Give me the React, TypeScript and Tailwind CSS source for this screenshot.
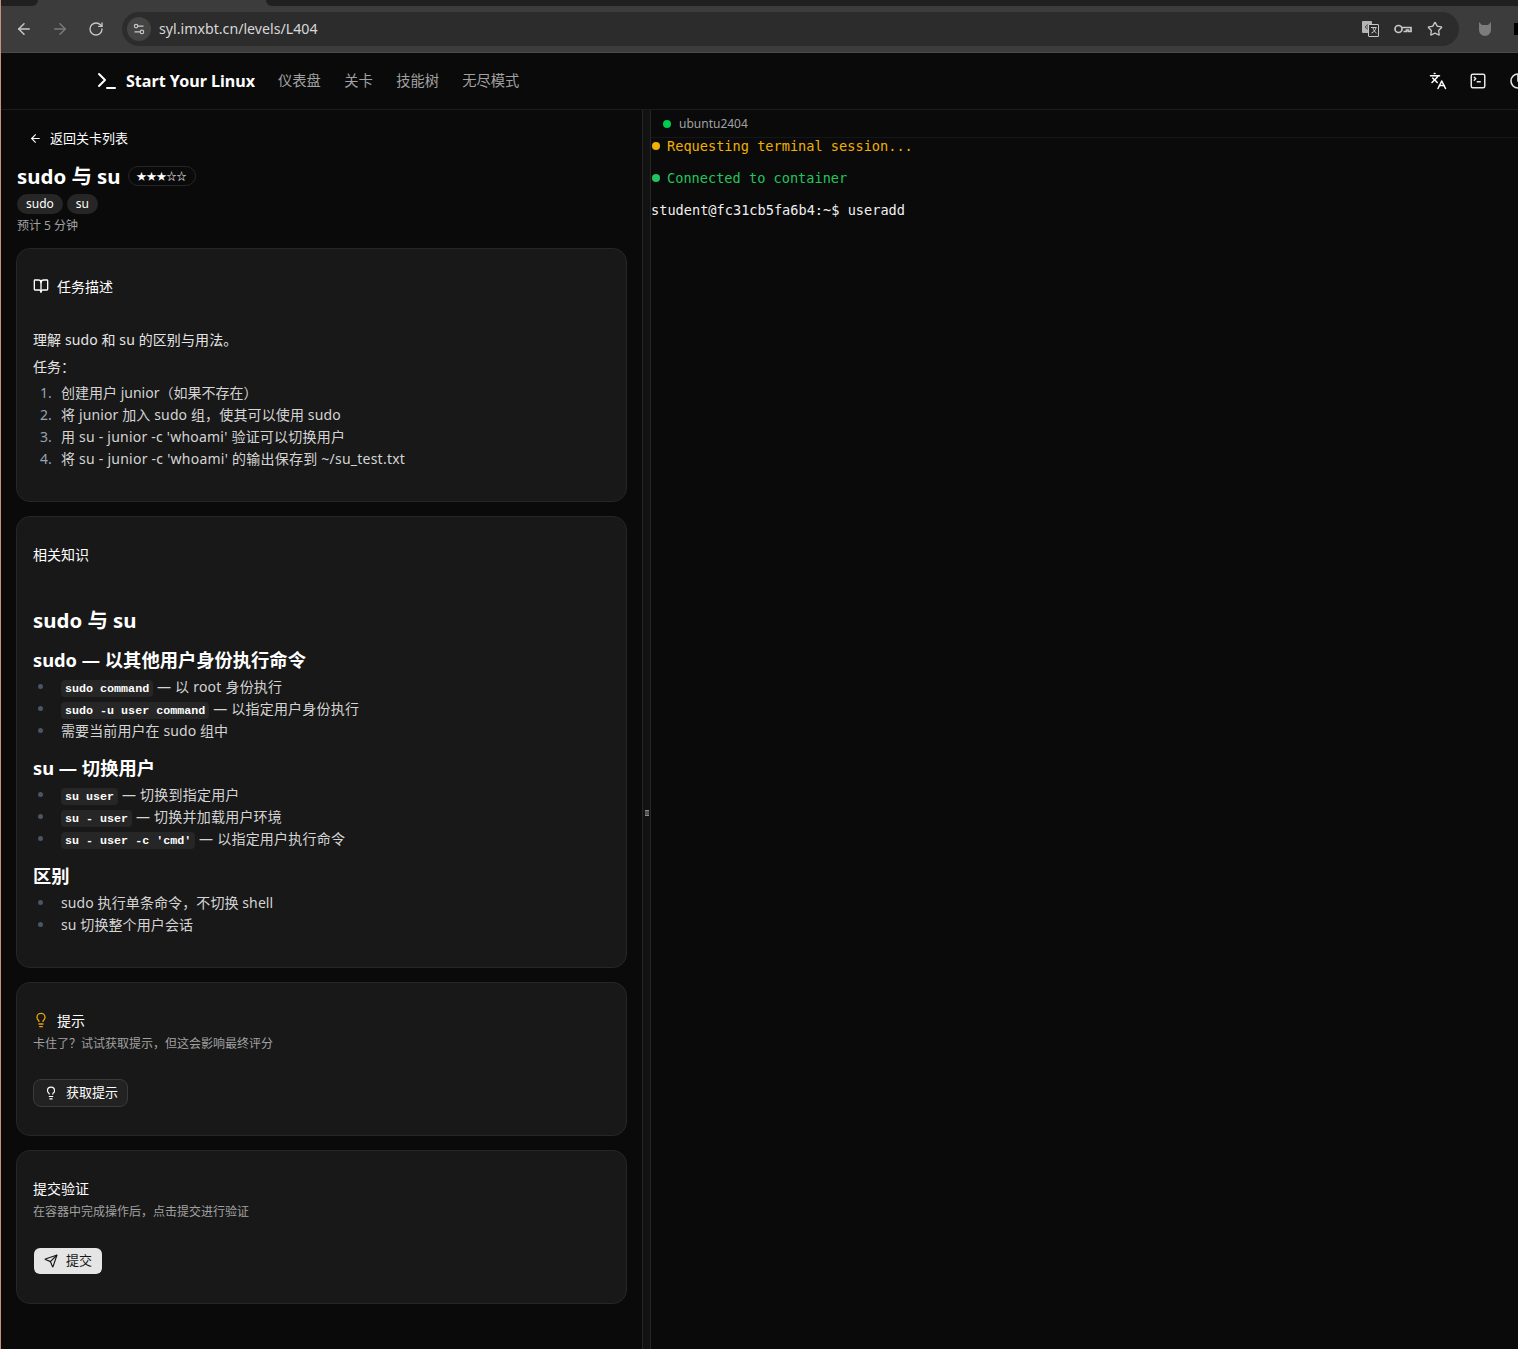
import React from "react";
import { ArrowLeft, ArrowRight, RotateCw, Languages, SquareTerminal, BookOpen, Lightbulb, Send, Star, Terminal, Settings2 } from "lucide-react";

const font = { fontFamily: '"Noto Sans", "Noto Sans CJK SC", sans-serif' };

function Code({ children }: { children: React.ReactNode }) {
  return (
    <code className="rounded-[4px] bg-[#262626] px-[4px] py-[1.5px] font-['Liberation_Mono',monospace] text-[11.7px] font-bold tracking-normal text-white">
      {children}
    </code>
  );
}

function Bullet({ children, coded = false }: { children: React.ReactNode; coded?: boolean }) {
  return (
    <li className="relative flex h-[22px] items-center pl-[28px] text-[14px] text-[#d4d4d4]">
      <span className="absolute left-[5px] top-[9px] h-[5px] w-[5px] rounded-full bg-[#4b5563]" />
      {coded ? (
        <span className="whitespace-pre pt-[2px] tracking-[0.22px]">{children}</span>
      ) : (
        <span className="whitespace-pre tracking-[0.1px]">{children}</span>
      )}
    </li>
  );
}

function Num({ n, children, track = "" }: { n: number; children: React.ReactNode; track?: string }) {
  return (
    <li className="flex h-[22px] items-center text-[14px] text-[#d4d4d4]">
      <span className="w-[28px] pl-[7px] text-[#94a3b8]">{n}.</span>
      <span className={`whitespace-pre ${track}`}>{children}</span>
    </li>
  );
}

function Card({ children, h }: { children: React.ReactNode; h: string }) {
  return <section className={`rounded-[14px] border border-[#262626] bg-[#181818] px-[16px] ${h}`}>{children}</section>;
}

function Chrome() {
  return (
    <div className="h-[53px] shrink-0 border-b border-[#4a4a4a] bg-[#3c3c3c]">
      <div className="flex h-[6px]">
        <div className="w-[37px] rounded-br-[8px] bg-[#202020]" />
        <div className="w-[228px]" />
        <div className="flex-1 rounded-bl-[8px] bg-[#202020]" />
      </div>
      <div className="flex h-[46px] items-center text-[#c7c7c7]">
        <div className="flex w-[121px] items-center pl-[14px]">
          <ArrowLeft size={18} className="text-[#c7c7c7]" />
          <ArrowRight size={18} className="ml-[18px] text-[#7a7a7a]" />
          <RotateCw size={16} className="ml-[19px]" />
        </div>
        <div className="flex h-[34px] w-[1337px] items-center rounded-full bg-[#2c2c2c] pl-[5px] pr-[16px]">
          <div className="flex h-[24px] w-[24px] items-center justify-center rounded-full bg-[#444444]">
            <Settings2 size={14} />
          </div>
          <span className="ml-[8px] pb-[1px] text-[14.2px] text-[#d8d8d8]">syl.imxbt.cn/levels/L404</span>
          <div className="ml-auto flex items-center">
            <svg width="19" height="18" viewBox="0 0 19 18" fill="none">
              <rect x="1" y="1" width="10" height="12" rx="1" fill="#b5b5b5" />
              <path d="M7.5 5.2a2 2 0 1 0 0 3.6V7H6" stroke="#3c3c3c" />
              <rect x="7.5" y="4.5" width="10" height="12" rx="0.5" fill="#2c2c2c" stroke="#c7c7c7" />
              <path d="M10 7.5h5.5M12 7.5c.4 2.5 1.5 4.5 3.5 5.5M15 7.5c-.4 2.5-2 4.5-4.5 5.5" stroke="#c7c7c7" />
            </svg>
            <svg width="18" height="10" viewBox="0 0 18 10" className="ml-[14px]" fill="none" stroke="#c7c7c7" strokeWidth="1.7">
              <circle cx="4.5" cy="5" r="3.5" />
              <path d="M8 3.5h9v4h-2.5V6h-2v1.5H9.5" />
            </svg>
            <Star size={16} className="ml-[15px]" />
          </div>
        </div>
        <svg width="16" height="16" viewBox="0 0 16 16" className="ml-[18px]" fill="#7c7c7c">
          <path d="M2 1l3 3h6l3-3v8c0 3-3 6-6 6s-6-3-6-6z" />
        </svg>
        <div className="ml-auto h-[12px] w-[4px] bg-black" />
      </div>
    </div>
  );
}

function Nav() {
  return (
    <header className="flex h-[57px] shrink-0 items-center border-b border-[#1c1c1c] bg-[#0a0a0a] pl-[94px]">
      <Terminal size={24} strokeWidth={2} className="text-white" />
      <span className="ml-[7px] text-[16.1px] font-bold text-white">Start Your Linux</span>
      <nav className="ml-[23px] flex gap-[23.4px] pb-[1px] text-[14.25px] text-[#a1a1a1]">
        <span>仪表盘</span>
        <span>关卡</span>
        <span>技能树</span>
        <span>无尽模式</span>
      </nav>
      <div className="ml-auto flex items-center gap-[22px]">
        <Languages size={18} className="text-white" />
        <SquareTerminal size={18} className="text-[#e5e5e5]" />
        <svg width="18" height="18" viewBox="0 0 18 18" className="mr-[-9px]" fill="none" stroke="#e5e5e5" strokeWidth="1.6">
          <circle cx="9" cy="9" r="7" />
          <path d="M9 2v7h7" fill="#e5e5e5" />
        </svg>
      </div>
    </header>
  );
}

const h3 = "h-[28px] text-[18.3px] font-bold leading-[28px] text-white";

function Left() {
  return (
    <aside className="h-full w-[641px] shrink-0 overflow-hidden px-[15px]">
      <div className="flex h-[55px] items-center pl-[13px] pt-[2px] text-[13px] text-white">
        <ArrowLeft size={13} />
        <span className="ml-[8px]">返回关卡列表</span>
      </div>
      <div className="flex h-[22px] items-center pl-[1px]">
        <h1 className="text-[20.4px] font-bold text-white">sudo 与 su</h1>
        <span className="ml-[7px] flex h-[20px] items-center rounded-full border border-[#262626] px-[8px] text-[10px] leading-none text-white">★★★☆☆</span>
      </div>
      <div className="mt-[7px] flex h-[20px] gap-[4px] pl-[1px] text-[12px] text-white">
        <span className="flex items-center rounded-full bg-[#262626] px-[9px]">sudo</span>
        <span className="flex items-center rounded-full bg-[#262626] px-[9px]">su</span>
      </div>
      <p className="mt-[3px] h-[20px] pl-[1px] text-[12px] leading-[18px] text-[#a1a1a1]">预计 5 分钟</p>
      <div className="mt-[11px] flex flex-col gap-[14px]">
        <Card h="h-[254px]">
          <div className="flex h-[74px] items-center gap-[8px] text-[14px] text-white">
            <BookOpen size={16} />
            <span>任务描述</span>
          </div>
          <p className="mt-[6px] text-[14px] leading-[22px] tracking-[0.1px] text-[#e5e5e5]">理解 sudo 和 su 的区别与用法。</p>
          <p className="mt-[5px] text-[14px] leading-[22px] text-[#e5e5e5]">任务：</p>
          <ol className="mt-[3px]">
            <Num n={1}>创建用户 junior（如果不存在）</Num>
            <Num n={2} track="tracking-[0.13px]">将 junior 加入 sudo 组，使其可以使用 sudo</Num>
            <Num n={3} track="tracking-[0.22px]">用 su - junior -c 'whoami' 验证可以切换用户</Num>
            <Num n={4} track="tracking-[0.24px]">将 su - junior -c 'whoami' 的输出保存到 ~/su_test.txt</Num>
          </ol>
        </Card>
        <Card h="h-[452px]">
          <div className="flex h-[74px] items-center text-[14px] text-white">相关知识</div>
          <h2 className="mt-[14px] h-[30px] text-[20.4px] font-bold leading-[30px] text-white">sudo 与 su</h2>
          <h3 className={`mt-[11px] ${h3}`}>sudo — 以其他用户身份执行命令</h3>
          <ul className="mt-[1px]">
            <Bullet coded><Code>sudo command</Code> — 以 root 身份执行</Bullet>
            <Bullet coded><Code>sudo -u user command</Code> — 以指定用户身份执行</Bullet>
            <Bullet>需要当前用户在 sudo 组中</Bullet>
          </ul>
          <h3 className={`mt-[13px] ${h3}`}>su — 切换用户</h3>
          <ul className="mt-[1px]">
            <Bullet coded><Code>su user</Code> — 切换到指定用户</Bullet>
            <Bullet coded><Code>su - user</Code> — 切换并加载用户环境</Bullet>
            <Bullet coded><Code>su - user -c 'cmd'</Code> — 以指定用户执行命令</Bullet>
          </ul>
          <h3 className={`mt-[13px] ${h3}`}>区别</h3>
          <ul className="mt-[1px]">
            <Bullet>sudo 执行单条命令，不切换 shell</Bullet>
            <Bullet>su 切换整个用户会话</Bullet>
          </ul>
        </Card>
        <Card h="h-[154px]">
          <div className="mt-[27px] flex h-[20px] items-center gap-[8px] text-[14px] text-white">
            <Lightbulb size={16} className="text-[#e5a50a]" />
            <span>提示</span>
          </div>
          <p className="mt-[4px] text-[12px] leading-[20px] text-[#a1a1a1]">卡住了？试试获取提示，但这会影响最终评分</p>
          <button className="mt-[25px] flex h-[28px] items-center gap-[8px] rounded-[8px] border border-[#3a3a3a] bg-[#222222] pl-[10px] pr-[9px] text-[13px] text-white">
            <Lightbulb size={14} />
            <span>获取提示</span>
          </button>
        </Card>
        <Card h="h-[154px]">
          <div className="mt-[27px] flex h-[20px] items-center text-[14px] text-white">提交验证</div>
          <p className="mt-[4px] text-[12px] leading-[20px] text-[#a1a1a1]">在容器中完成操作后，点击提交进行验证</p>
          <button className="ml-[1px] mt-[26px] flex h-[26px] items-center gap-[8px] rounded-[6px] bg-[#e5e5e5] px-[10px] text-[13px] text-[#171717]">
            <Send size={14} />
            <span>提交</span>
          </button>
        </Card>
      </div>
    </aside>
  );
}

function TerminalPane() {
  const mono = "font-['DejaVu_Sans_Mono',monospace] text-[13.62px] leading-[16px]";
  return (
    <main className="min-w-0 flex-1">
      <div className="flex h-[28px] items-center gap-[8px] border-b border-[#161616] pl-[12px] text-[12px] text-[#a1a1a1]">
        <span className="h-[8px] w-[8px] rounded-full bg-[#00c950]" />
        <span>ubuntu2404</span>
      </div>
      <div className={`${mono} whitespace-pre`}>
        <div className="flex h-[16px] items-center gap-[7px] text-[#f0b100]">
          <span className="ml-[1px] h-[8px] w-[8px] rounded-full bg-[#f0b100]" />
          Requesting terminal session...
        </div>
        <div className="mt-[16px] flex h-[16px] items-center gap-[7px] text-[#22c55e]">
          <span className="ml-[1px] h-[8px] w-[8px] rounded-full bg-[#22c55e]" />
          Connected to container
        </div>
        <div className="mt-[16px] h-[16px] text-[#f0f0f0]">student@fc31cb5fa6b4:~$ useradd</div>
      </div>
    </main>
  );
}

export default function App() {
  return (
    <div className="flex h-[1349px] w-[1518px] flex-col overflow-hidden border-l border-[#c98f80] bg-[#0a0a0a]" style={font}>
      <Chrome />
      <Nav />
      <div className="flex min-h-0 flex-1">
        <Left />
        <div className="relative w-[9px] shrink-0 border-x border-[#262626] bg-[#121212]">
          <span className="absolute left-[2px] top-[700px] h-[6px] w-[4px] border-y border-[#8a8a8a] bg-[#555555]" />
        </div>
        <TerminalPane />
      </div>
    </div>
  );
}
